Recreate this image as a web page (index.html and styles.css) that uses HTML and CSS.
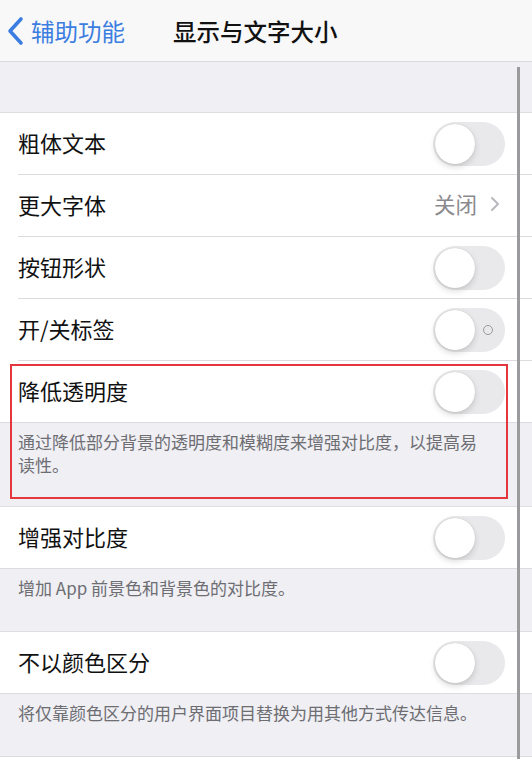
FILE: index.html
```html
<!DOCTYPE html>
<html lang="zh-CN">
<head>
    <meta charset="UTF-8">
    <meta name="viewport" content="width=device-width, initial-scale=1.0">
    <title>显示与文字大小</title>
    <link rel="stylesheet" href="styles.css">
</head>
<body>
    <div class="screen">
        <header class="nav">
            <a class="back" href="#">
                <svg width="20" height="30" viewBox="0 0 20 30">
                    <path d="M15 3 L4 15 L15 27" fill="none" stroke="#3b7de0" stroke-width="3.6" stroke-linecap="round" stroke-linejoin="round"/>
                </svg>
                <span>辅助功能</span>
            </a>
            <h1 class="title">显示与文字大小</h1>
        </header>

        <div class="gap"></div>

        <div class="group">
            <div class="row">
                <div class="row-inner">
                    <span class="label">粗体文本</span>
                    <span class="switch"><span class="knob"></span></span>
                </div>
            </div>
            <div class="row">
                <div class="row-inner">
                    <span class="label">更大字体</span>
                    <span class="detail">关闭
                        <svg width="12" height="18" viewBox="0 0 12 18"><path d="M3 3 L9 9 L3 15" fill="none" stroke="#b8b8bd" stroke-width="2" stroke-linecap="round" stroke-linejoin="round"/></svg>
                    </span>
                </div>
            </div>
            <div class="row">
                <div class="row-inner">
                    <span class="label">按钮形状</span>
                    <span class="switch"><span class="knob"></span></span>
                </div>
            </div>
            <div class="row">
                <div class="row-inner">
                    <span class="label">开/关标签</span>
                    <span class="switch"><span class="knob"></span><span class="off-mark"></span></span>
                </div>
            </div>
            <div class="highlight">
                <div class="row last">
                    <div class="row-inner">
                        <span class="label">降低透明度</span>
                        <span class="switch"><span class="knob"></span></span>
                    </div>
                </div>
                <div class="footer tall">通过降低部分背景的透明度和模糊度来增强对比度，以提高易读性。</div>
            </div>
        </div>

        <div class="group">
            <div class="row last">
                <div class="row-inner">
                    <span class="label">增强对比度</span>
                    <span class="switch"><span class="knob"></span></span>
                </div>
            </div>
            <div class="footer">增加 App 前景色和背景色的对比度。</div>
        </div>

        <div class="group">
            <div class="row last">
                <div class="row-inner">
                    <span class="label">不以颜色区分</span>
                    <span class="switch"><span class="knob"></span></span>
                </div>
            </div>
            <div class="footer">将仅靠颜色区分的用户界面项目替换为用其他方式传达信息。</div>
        </div>

        <div class="bottom"></div>

        <div class="scrollbar"></div>
    </div>
</body>
</html>
```

FILE: styles.css
```css
body {
    margin: 0;
    padding: 0;
    font-family: "Noto Sans CJK SC", "Noto Sans", sans-serif;
    background: #fff;
}

.screen {
    width: 532px;
    height: 759px;
    overflow: hidden;
    position: relative; /* para a barra de rolagem */
    background: #efeff4;
}

/* barra de navegação */
.nav {
    height: 62px;
    box-sizing: border-box;
    background: #f8f8f9;
    border-bottom: 1px solid #d9d9dc;
    display: flex;
    align-items: center;
}

.back {
    display: flex;
    align-items: center;
    gap: 5px;
    padding-left: 6px;
    color: #3b7de0;
    text-decoration: none;
    font-size: 23.5px;
}

.title {
    margin: 0 0 0 48px;
    font-size: 23.5px;
    font-weight: 500;
    color: #111;
}

.gap {
    height: 50px;
}

.group {
    border-top: 1px solid #dedee2;
}

.row {
    height: 62px;
    box-sizing: border-box;
    padding-left: 18px;
    background: #fff;
}

.row-inner {
    height: 100%;
    box-sizing: border-box;
    border-bottom: 1px solid #dcdce0;
    display: flex;
    align-items: center;
    justify-content: space-between;
    padding-right: 27px;
    padding-bottom: 4px;
}

.row.last {
    border-bottom: 1px solid #dcdce0;
}

.row.last .row-inner {
    border-bottom: none;
}

.label {
    font-size: 22px;
    color: #111;
}

.detail {
    display: flex;
    align-items: center;
    gap: 12px;
    font-size: 21.5px;
    color: #8a8a8e;
    margin-right: 4px;
}

/* interruptor desligado */
.switch {
    width: 72px;
    height: 44px;
    border-radius: 22px;
    background: #e9e9eb;
    position: relative;
    flex-shrink: 0;
    margin-top: 4px;
}

.knob {
    position: absolute;
    top: 2px;
    left: 2px;
    width: 40px;
    height: 40px;
    border-radius: 50%;
    background: #fff;
    box-shadow: 0 3px 6px rgba(0, 0, 0, 0.15), 0 0 1px rgba(0, 0, 0, 0.2);
}

.off-mark {
    position: absolute;
    top: 17px;
    right: 12px;
    width: 8px;
    height: 8px;
    border: 1.5px solid #9a9a9e;
    border-radius: 50%;
}

.footer {
    padding: 7px 18px 0;
    box-sizing: border-box;
    min-height: 62px;
    font-size: 17px;
    line-height: 23px;
    color: #6d6d72;
}

.footer.tall {
    min-height: 83px;
    padding-right: 52px;
}

/* caixa vermelha de destaque */
.highlight {
    position: relative;
}

.highlight::after {
    content: "";
    position: absolute;
    top: 3px;
    left: 10px;
    right: 24px;
    bottom: 7px;
    border: 2px solid #e3363d;
}

.bottom {
    border-top: 1px solid #dcdce0;
    background: #fff;
    height: 10px;
}

.scrollbar {
    position: absolute;
    top: 67px;
    bottom: 0;
    left: 517px;
    width: 3px;
    background: #9b9b9e;
}
```
